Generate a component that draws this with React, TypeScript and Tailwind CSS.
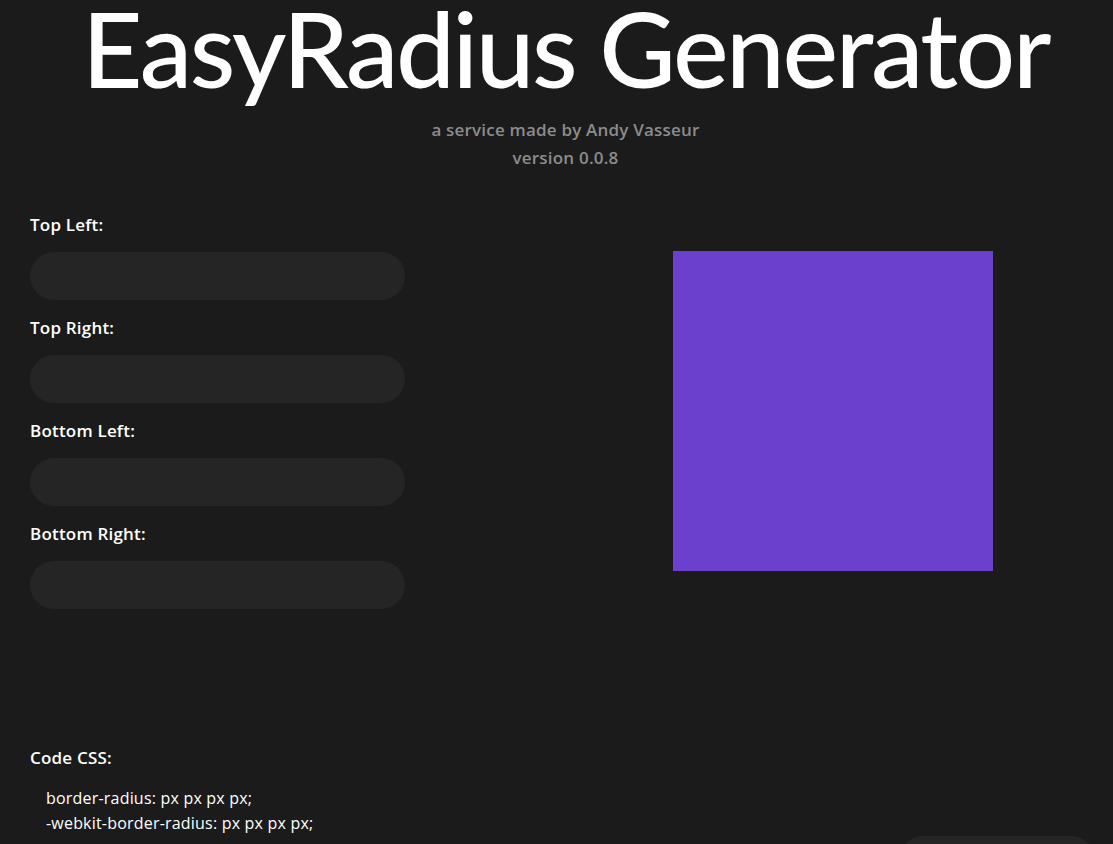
export default function App() {
  const corners = ["Top Left:", "Top Right:", "Bottom Left:", "Bottom Right:"];

  return (
    <div className="min-h-screen bg-[#1b1b1b] text-white font-['Open_Sans',sans-serif] overflow-hidden">
      <header className="text-center pl-[18px]">
        <h1 className="font-['Lato',sans-serif] text-[105px] leading-[90px] pt-[2px] pb-[24px] font-medium tracking-[-2.4px] whitespace-nowrap">
          EasyRadius Generator
        </h1>
        <p className="text-[17px] leading-[28px] font-semibold text-[#8c8c8c] tracking-[0.2px]">a service made by Andy Vasseur</p>
        <p className="text-[17px] leading-[28px] font-semibold text-[#8c8c8c] tracking-[0.2px]">version 0.0.8</p>
      </header>

      <main className="grid grid-cols-2 mt-[41px]">
        <div className="pl-[30px] flex flex-col">
          {corners.map((c) => (
            <div key={c} className="flex flex-col">
              <label className="text-[17px] leading-[24px] font-semibold tracking-[0.2px]">{c}</label>
              <input className="mt-[15px] mb-[16px] w-[375px] h-[48px] rounded-full bg-[#252525] outline-none px-5 text-white" />
            </div>
          ))}
        </div>
        <div className="flex items-center justify-center pb-[16px] pr-[4px]">
          <div className="w-[320px] h-[320px] bg-[#6a40cd]" />
        </div>
      </main>

      <section className="pl-[30px] mt-[121px]">
        <h2 className="text-[17px] leading-[24px] font-semibold tracking-[0.2px]">Code CSS:</h2>
        <div className="mt-[16px] pl-[16px] text-[16px] leading-[25px] font-medium tracking-[0.2px]">
          <p>border-radius: px px px px;</p>
          <p>-webkit-border-radius: px px px px;</p>
        </div>
      </section>

      <div className="flex justify-end pr-[18px] mt-0">
        <button className="w-[196px] h-[48px] rounded-full bg-[#252525]" />
      </div>
    </div>
  );
}
